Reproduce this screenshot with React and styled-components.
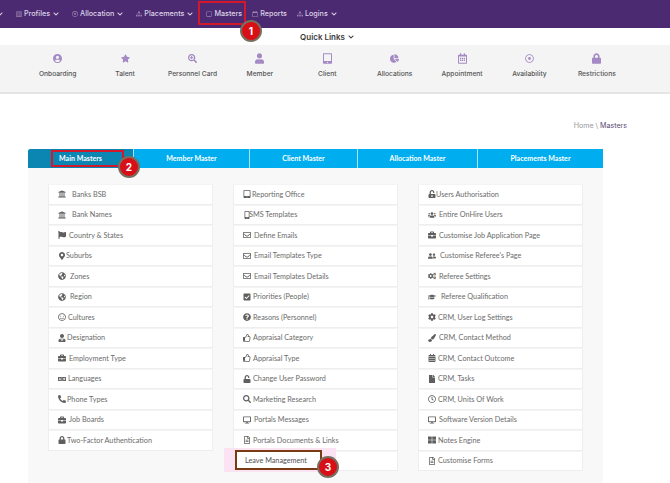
import React from "react";
import styled, { createGlobalStyle } from "styled-components";
import {
  FaUniversity, FaFlag, FaMapMarkerAlt, FaGlobeAmericas, FaRegSmile, FaUserTie, FaBriefcase, FaLanguage, FaPhoneAlt, FaLock,
  FaTabletAlt, FaMobileAlt, FaRegEnvelope, FaCheckSquare, FaQuestionCircle, FaRegThumbsUp, FaUnlock, FaSearch, FaDesktop, FaRegFileAlt,
  FaUnlockAlt, FaUsers, FaUserFriends, FaCogs, FaGraduationCap, FaCog, FaPaintBrush, FaCalendarAlt, FaFile, FaRegClock, FaThLarge,
  FaChevronDown, FaUserCircle, FaStar, FaSearchPlus, FaUser, FaChartPie, FaRegCalendarAlt, FaRegDotCircle, FaRegSquare, FaRegListAlt, FaSitemap, FaRegCalendar,
} from "react-icons/fa";

const Global = createGlobalStyle`
  html, body { margin: 0; padding: 0; background: #fff; }
  body { font-family: "Lato", "Liberation Sans", sans-serif; }
`;

const Page = styled.div`
  position: relative;
  width: 670px;
  height: 483px;
  overflow: hidden;
  background: #fff;
`;

const TopBar = styled.nav`
  height: 28px;
  background: #4c2a72;
  display: flex;
  align-items: center;
  padding-bottom: 1px;
  box-sizing: border-box;
  margin-left: -4px;
  gap: 13px;
  color: #dcd4e6;
`;

const NavItem = styled.div`
  display: flex;
  align-items: center;
  gap: 2px;
  margin-right: ${(p) => (p.$plain ? "-3px" : "0")};
  font: 500 7.2px "Inter", "Open Sans", sans-serif;
  white-space: nowrap;
  svg.lead { font-size: 6px; opacity: 0.55; }
  svg.caret { font-size: 6px; margin-left: 1px; }
`;

const QuickBar = styled.div`
  height: 17px;
  background: #fff;
  display: flex;
  align-items: center;
  justify-content: center;
  gap: 3px;
  padding-right: 16px;
  font: 600 8px "Inter", "Open Sans", sans-serif;
  color: #3b3b3b;
  svg { font-size: 6px; }
`;

const QuickGrid = styled.div`
  height: 47px;
  background: #f4f4f4;
  border-bottom: 2px solid #e5e5e5;
  display: grid;
  grid-template-columns: repeat(9, 67.4px);
  padding-left: 24px;
`;

const QuickItem = styled.div`
  display: flex;
  flex-direction: column;
  align-items: center;
  padding-top: 8px;
  gap: 5.5px;
  font: 500 6.7px "Inter", "Open Sans", sans-serif;
  color: #555;
  white-space: nowrap;
  svg { font-size: 9px; color: #a489c4; height: 11px; }
`;

const Crumb = styled.div`
  height: 55px;
  box-sizing: border-box;
  padding: 27px 43px 0 0;
  text-align: right;
  font: 400 7.1px "Inter", "Open Sans", sans-serif;
  color: #999;
  b { font-weight: 400; color: #5b4a72; }
`;

const Panel = styled.section`
  margin-left: 28px;
  width: 575px;
  height: 334px;
  background: #f8f8f8;
`;

const Tabs = styled.div`
  display: grid;
  grid-template-columns: 105px 116px 108px 120px 126px;
  height: 19px;
  background: #00aeef;
  border-radius: 3px 0 0 0;
  overflow: hidden;
`;

const Tab = styled.div`
  display: flex;
  align-items: center;
  justify-content: center;
  font: 700 7.05px "Lato", sans-serif;
  color: #fff;
  background: ${(p) => (p.$active ? "#0b86b3" : "transparent")};
  border-left: ${(p) => (p.$active ? "0" : "1px solid #a9e2f7")};
`;

const Columns = styled.div`
  display: grid;
  grid-template-columns: repeat(3, 165px);
  column-gap: 20px;
  padding: 16px 0 0 20px;
`;

const Column = styled.div`
  display: grid;
  grid-auto-rows: 20.5px;
`;

const Row = styled.div`
  box-sizing: border-box;
  height: 20.5px;
  display: flex;
  align-items: center;
  background: #fff;
  border: 1px solid #eeeeee;
  border-top-color: #f4f4f4;
  padding-left: ${(p) => p.$inset}px;
  font: 400 7.25px "Lato", sans-serif;
  color: ${(p) => p.$tone};
  white-space: nowrap;
  svg { font-size: 8px; color: #5f5f5f; flex: none; margin-right: ${(p) => p.$gap}px; }
`;

const Mark = styled.div`
  position: absolute;
  box-sizing: border-box;
  left: ${(p) => p.$x}px;
  top: ${(p) => p.$y}px;
  width: ${(p) => p.$w}px;
  height: ${(p) => p.$h}px;
  border: 2px solid ${(p) => p.$color};
`;

const Halo = styled.div`
  position: absolute;
  box-sizing: border-box;
  left: 224px;
  top: 448px;
  width: 112px;
  height: 24px;
  border-style: solid;
  border-color: #fbe3f3;
  border-width: 2px 14px 2px 11px;
`;

const Badge = styled.div`
  position: absolute;
  left: ${(p) => p.$x - 11}px;
  top: ${(p) => p.$y - 11}px;
  width: 22px;
  height: 22px;
  box-sizing: border-box;
  border-radius: 50%;
  background: #d80f16;
  border: 2px solid #77705f;
  color: #fff;
  display: flex;
  align-items: center;
  justify-content: center;
  font: 700 10px "Inter", sans-serif;
`;

const nav = [
  { label: "", icon: null, caret: true },
  { label: "Profiles", icon: FaRegListAlt, caret: true },
  { label: "Allocation", icon: FaRegDotCircle, caret: true },
  { label: "Placements", icon: FaSitemap, caret: true },
  { label: "Masters", icon: FaRegSquare },
  { label: "Reports", icon: FaRegCalendar },
  { label: "Logins", icon: FaSitemap, caret: true },
];

const quick = [
  ["Onboarding", FaUserCircle], ["Talent", FaStar], ["Personnel Card", FaSearchPlus], ["Member", FaUser], ["Client", FaTabletAlt],
  ["Allocations", FaChartPie], ["Appointment", FaRegCalendarAlt], ["Availability", FaRegDotCircle], ["Restrictions", FaLock],
];

const tabs = ["Main Masters", "Member Master", "Client Master", "Allocation Master", "Placements Master"];

const col1 = [
  ["Banks BSB", FaUniversity, 6], ["Bank Names", FaUniversity, 6], ["Country & States", FaFlag, 3], ["Suburbs", FaMapMarkerAlt, 0],
  ["Zones", FaGlobeAmericas, 4], ["Region", FaGlobeAmericas, 4], ["Cultures", FaRegSmile, 2], ["Designation", FaUserTie, 1],
  ["Employment Type", FaBriefcase, 3], ["Languages", FaLanguage, 2], ["Phone Types", FaPhoneAlt, 1], ["Job Boards", FaBriefcase, 3],
  ["Two-Factor Authentication", FaLock, 1],
];
const col2 = [
  ["Reporting Office", FaTabletAlt, 1], ["SMS Templates", FaMobileAlt, -2], ["Define Emails", FaRegEnvelope, 3], ["Email Templates Type", FaRegEnvelope, 3],
  ["Email Templates Details", FaRegEnvelope, 3], ["Priorities (People)", FaCheckSquare, 2], ["Reasons (Personnel)", FaQuestionCircle, 2], ["Appraisal Category", FaRegThumbsUp, 2],
  ["Appraisal Type", FaRegThumbsUp, 2], ["Change User Password", FaUnlock, 2], ["Marketing Research", FaSearch, 2], ["Portals Messages", FaDesktop, 3],
  ["Portals Documents & Links", FaRegFileAlt, 2], ["Leave Management", null, 0],
];
const col3 = [
  ["Users Authorisation", FaUnlockAlt, 0], ["Entire OnHire Users", FaUsers, 3], ["Customise Job Application Page", FaBriefcase, 3], ["Customise Referee's Page", FaUserFriends, 4],
  ["Referee Settings", FaCogs, 3], ["Referee Qualification", FaGraduationCap, 5], ["CRM, User Log Settings", FaCog, 2], ["CRM, Contact Method", FaPaintBrush, 3],
  ["CRM, Contact Outcome", FaCalendarAlt, 2], ["CRM, Tasks", FaFile, 2], ["CRM, Units Of Work", FaRegClock, 2], ["Software Version Details", FaDesktop, 3],
  ["Notes Engine", FaThLarge, 2], ["Customise Forms", FaRegFileAlt, 2],
];

const Item = ({ data }) => {
  const [label, Icon, gap] = data;
  return (
    <Row $gap={gap} $inset={Icon ? 9 : 11} $tone={Icon ? "#6b6b6b" : "#4f4f4f"}>
      {Icon && <Icon />}
      {label}
    </Row>
  );
};

export default function App() {
  return (
    <Page>
      <Global />
      <TopBar>
        {nav.map(({ label, icon: Icon, caret }) => (
          <NavItem key={label || "first"} $plain={!caret}>
            {Icon && <Icon className="lead" />}
            {label}
            {caret && <FaChevronDown className="caret" />}
          </NavItem>
        ))}
      </TopBar>
      <QuickBar>Quick Links <FaChevronDown /></QuickBar>
      <QuickGrid>
        {quick.map(([label, Icon]) => (
          <QuickItem key={label}><Icon />{label}</QuickItem>
        ))}
      </QuickGrid>
      <Crumb>Home \ <b>Masters</b></Crumb>
      <Panel>
        <Tabs>
          {tabs.map((t, i) => <Tab key={t} $active={i === 0}>{t}</Tab>)}
        </Tabs>
        <Columns>
          {[col1, col2, col3].map((col, i) => (
            <Column key={i}>{col.map((d) => <Item key={d[0]} data={d} />)}</Column>
          ))}
        </Columns>
      </Panel>
      <Halo />
      <Mark $x={198} $y={1} $w={48} $h={24} $color="#d2182b" />
      <Mark $x={51} $y={150} $w={73} $h={17} $color="#d2182b" />
      <Mark $x={235} $y={450} $w={87} $h={20} $color="#7a3b14" />
      <Badge $x={251} $y={31}>1</Badge>
      <Badge $x={129} $y={167}>2</Badge>
      <Badge $x={328} $y={467}>3</Badge>
    </Page>
  );
}
